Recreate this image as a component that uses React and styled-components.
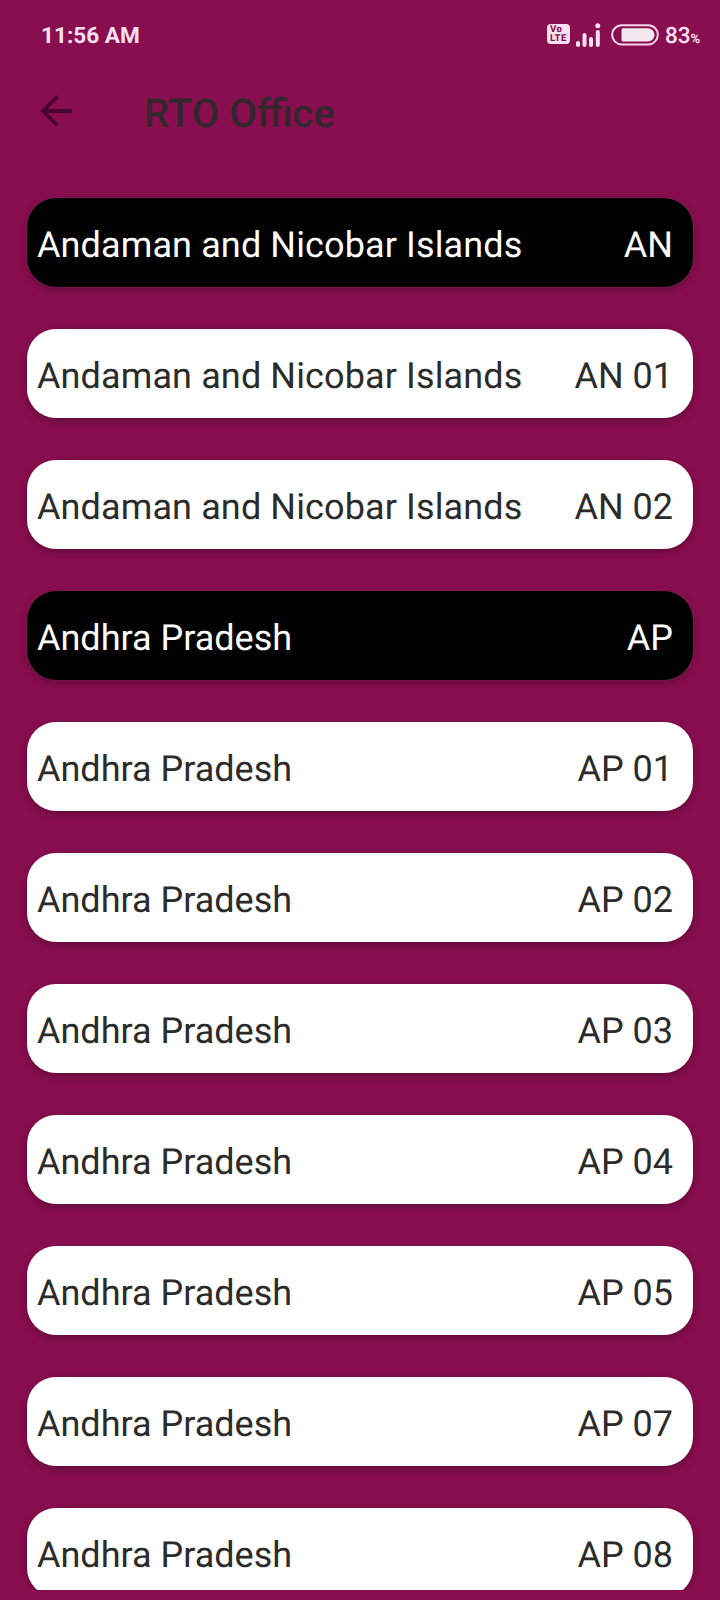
import React from 'react';
import styled, { createGlobalStyle } from 'styled-components';

const offices = [
  { name: 'Andaman and Nicobar Islands', code: 'AN', header: true },
  { name: 'Andaman and Nicobar Islands', code: 'AN 01' },
  { name: 'Andaman and Nicobar Islands', code: 'AN 02' },
  { name: 'Andhra Pradesh', code: 'AP', header: true },
  { name: 'Andhra Pradesh', code: 'AP 01' },
  { name: 'Andhra Pradesh', code: 'AP 02' },
  { name: 'Andhra Pradesh', code: 'AP 03' },
  { name: 'Andhra Pradesh', code: 'AP 04' },
  { name: 'Andhra Pradesh', code: 'AP 05' },
  { name: 'Andhra Pradesh', code: 'AP 07' },
  { name: 'Andhra Pradesh', code: 'AP 08' },
];

const App = () => {
  return (
    <>
      <GlobalStyle />
      <Screen>
        <StatusBar>
          <Clock>11:56 AM</Clock>
          <StatusIcons>
            <VolteBadge>
              <VolteLine>Vo</VolteLine>
              <VolteLine>LTE</VolteLine>
            </VolteBadge>
            <SignalIcon />
            <BatteryIcon />
            <BatteryText>
              83<small>%</small>
            </BatteryText>
          </StatusIcons>
        </StatusBar>

        <Toolbar>
          <BackButton aria-label="Back">
            <svg width="32" height="32" viewBox="0 0 32 32" fill="none" stroke="#4a0330" strokeWidth="3.8">
              <path d="M32 16H3M17.5 1.5L3 16L17.5 30.5" />
            </svg>
          </BackButton>
          <Title>RTO Office</Title>
        </Toolbar>

        <OfficeList>
          {offices.map((office) => (
            <OfficeCard key={office.code} $header={office.header}>
              <OfficeName $long={office.name.length > 20}>{office.name}</OfficeName>
              <span>{office.code}</span>
            </OfficeCard>
          ))}
        </OfficeList>
      </Screen>
    </>
  );
};

const SignalIcon = () => (
  <Signal width="25" height="25" viewBox="0 0 25 25" fill="#fbe0f3">
    <rect x="0" y="18" width="4" height="6" rx="2" />
    <rect x="6.5" y="10" width="4" height="14" rx="2" />
    <rect x="13" y="14" width="4" height="10" rx="2" />
    <rect x="19.8" y="7" width="4" height="17" rx="2" />
    <circle cx="21.8" cy="2.7" r="2.5" />
  </Signal>
);

const BatteryIcon = () => (
  <Battery width="48" height="22" viewBox="0 0 48 22" fill="none">
    <rect x="1.2" y="1.2" width="45.6" height="19.2" rx="9.6" stroke="#fbd5ef" strokeWidth="2" />
    <path d="M12 4.2H37a6.6 6.6 0 0 1 0 13.2H12a1.5 1.5 0 0 1-1.5-1.5V5.7a1.5 1.5 0 0 1 1.5-1.5Z" fill="#f3e6ec" />
  </Battery>
);

const GlobalStyle = createGlobalStyle`
  * {
    box-sizing: border-box;
  }

  body {
    margin: 0;
    background: #880e4f;
    font-family: Roboto, sans-serif;
    text-rendering: geometricPrecision;
  }
`;

const Screen = styled.div`
  width: 720px;
  height: 1600px;
  padding-bottom: 10px;
  display: flex;
  flex-direction: column;
  overflow: hidden;
  background: #880e4f;
`;

const StatusBar = styled.header`
  height: 70px;
  padding: 0 19px 0 41px;
  flex-shrink: 0;
  display: flex;
  align-items: center;
  justify-content: space-between;
  color: #fbe0f3;
`;

const Clock = styled.span`
  font-size: 22.6px;
  font-weight: 700;
`;

const StatusIcons = styled.div`
  display: flex;
  align-items: center;
`;

const VolteBadge = styled.div`
  width: 23px;
  height: 20px;
  margin: 0 6px 2px 0;
  padding: 2px 0 0 3px;
  border-radius: 4px;
  background: #fbe0f3;
  color: #880e4f;
`;

const VolteLine = styled.div`
  font-size: 9.5px;
  font-weight: 800;
  line-height: 8.5px;
  letter-spacing: 0.4px;
`;

const Signal = styled.svg`
  margin: 0 10px 0 0;
`;

const Battery = styled.svg`
  margin: 0 6px 0 0;
`;

const BatteryText = styled.span`
  width: 36px;
  padding-top: 2px;
  font-size: 22.5px;
  font-weight: 500;
  white-space: nowrap;

  small {
    font-size: 13px;
    font-weight: 700;
  }
`;

const Toolbar = styled.nav`
  height: 88px;
  padding: 0 40px 4px;
  flex-shrink: 0;
  display: flex;
  align-items: center;
`;

const BackButton = styled.button`
  width: 32px;
  height: 32px;
  margin: 0 72px 2px 0;
  padding: 0;
  border: none;
  background: none;
`;

const Title = styled.h1`
  margin: 0;
  padding-top: 2px;
  font-size: 40px;
  font-weight: 500;
  color: #33272d;
`;

const OfficeList = styled.main`
  flex: 1;
  min-height: 0;
  padding: 40px 27px 0;
  display: flex;
  flex-direction: column;
  gap: 42px;
  overflow: hidden;
`;

const OfficeCard = styled.div`
  height: 89px;
  padding: 4px 20px 0 10px;
  flex-shrink: 0;
  display: flex;
  align-items: center;
  justify-content: space-between;
  border-radius: 29px;
  font-size: 36px;
  white-space: nowrap;
  color: ${(props) => (props.$header ? '#fff' : '#2b2b2b')};
  background: ${(props) => (props.$header ? '#000' : '#fff')};
  box-shadow: ${(props) => (props.$header ? '0 0 1px rgba(255, 255, 255, 0.35), ' : '')}0 3px 9px rgba(0, 0, 0, 0.28);
`;

const OfficeName = styled.span`
  letter-spacing: ${(props) => (props.$long ? '0.12px' : 'normal')};
`;

export default App;
